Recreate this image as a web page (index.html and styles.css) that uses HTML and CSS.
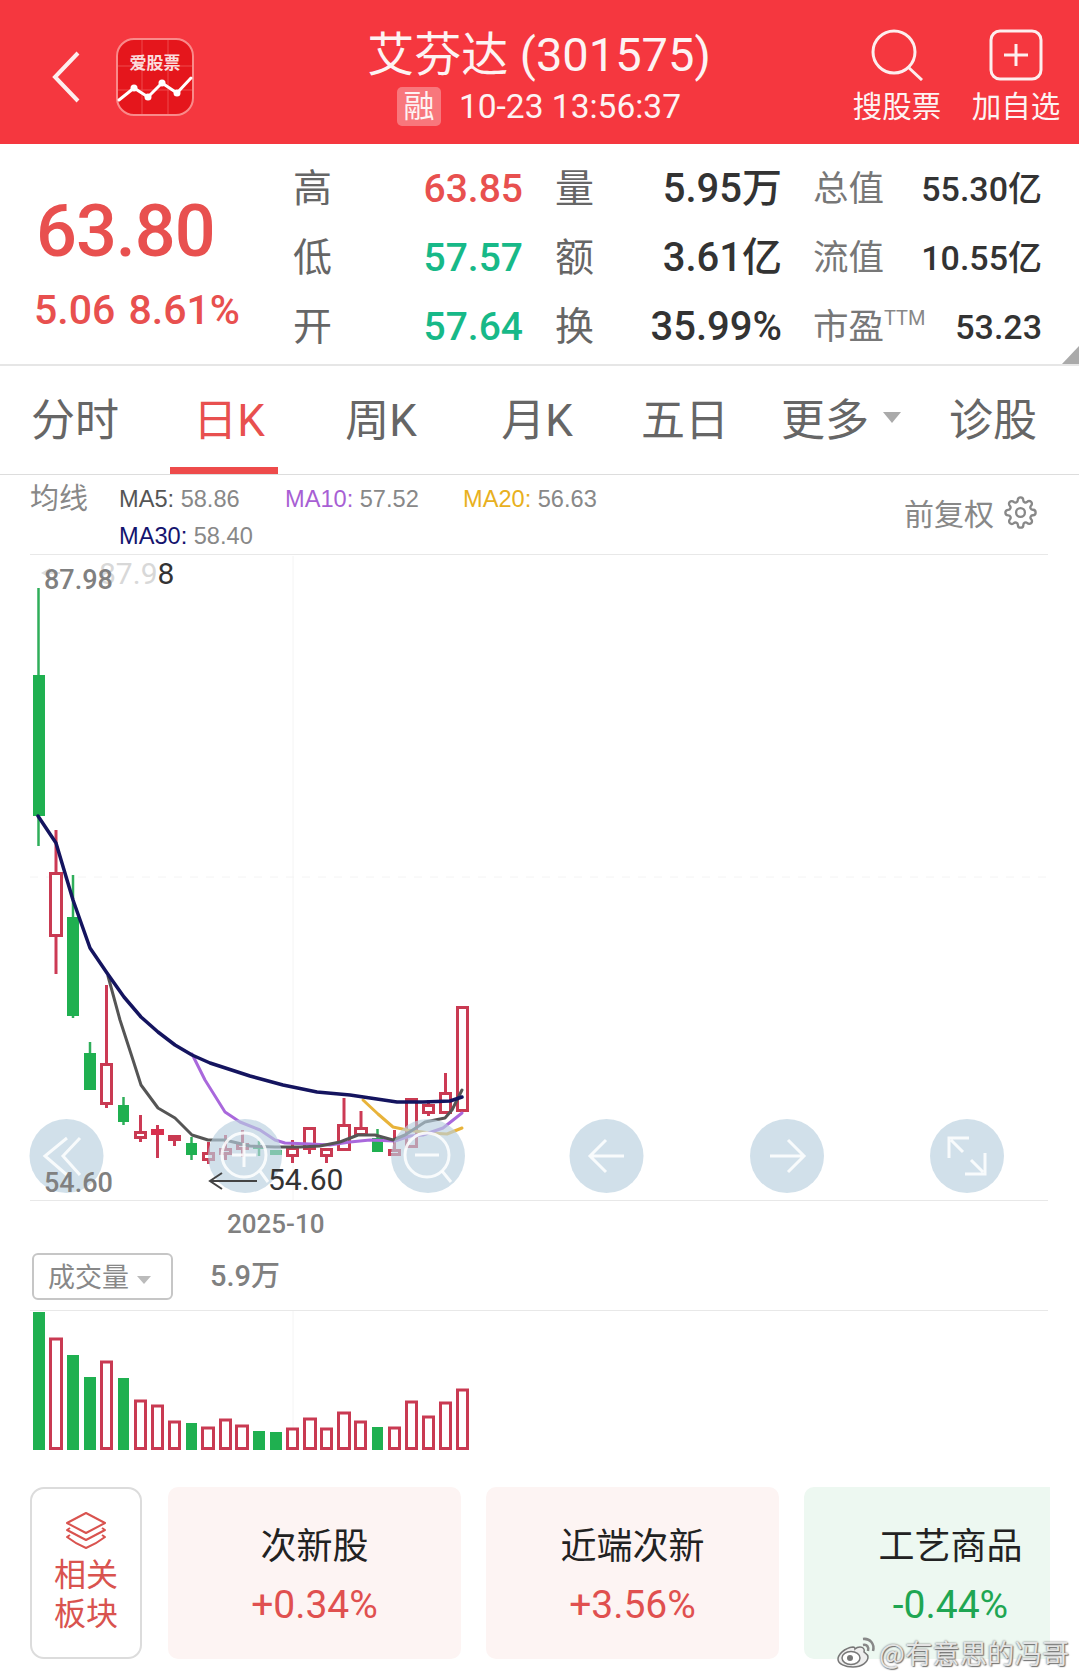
FILE: index.html
```html
<!DOCTYPE html>
<html lang="zh-CN">
<head>
    <meta charset="UTF-8">
    <meta name="viewport" content="width=device-width, initial-scale=1.0">
    <title>艾芬达 (301575)</title>
    <link rel="stylesheet" href="styles.css">
</head>
<body>
    <header class="topbar">
        <div class="topbar-left">
            <svg class="back-icon" viewBox="0 0 28 52"><path d="M26 2 L3 26 L26 50"/></svg>
            <svg class="logo" viewBox="0 0 78 78">
                <rect x="1" y="1" width="76" height="76" rx="17" fill="#e5161c" stroke="#f98a8a" stroke-width="2"/>
                <path d="M2 28H76M2 52H76M26 2V76M52 2V76" stroke="#ee4a4c" stroke-width="1"/>
                <text x="39" y="31" class="logo-text" text-anchor="middle">爱股票</text>
                <polyline points="3,62 18,50 32,59 46,45 61,55 75,40" fill="none" stroke="#fff" stroke-width="3"/>
                <circle cx="18" cy="50" r="3.5" fill="#fff"/><circle cx="32" cy="59" r="3.5" fill="#fff"/>
                <circle cx="46" cy="45" r="3.5" fill="#fff"/><circle cx="61" cy="55" r="3.5" fill="#fff"/>
            </svg>
        </div>
        <div class="topbar-title">
            <h1>艾芬达 (301575)</h1>
            <div class="subline"><span class="badge">融</span><span class="time">10-23 13:56:37</span></div>
        </div>
        <div class="tools">
            <div class="tool">
                <svg class="tool-icon" viewBox="0 0 54 52"><circle cx="24" cy="23" r="21"/><path d="M38 38 L52 51"/></svg>
                <span>搜股票</span>
            </div>
            <div class="tool">
                <svg class="tool-icon" viewBox="0 0 54 52"><rect x="2" y="2" width="50" height="48" rx="9"/><path d="M27 15V37M15 26H39"/></svg>
                <span>加自选</span>
            </div>
        </div>
    </header>

    <section class="stats">
        <div class="price">
            <div class="price-now">63.80</div>
            <div class="price-change">5.06 8.61%</div>
        </div>
        <div class="stat-grid">
            <span class="lbl">高</span><span class="val red">63.85</span>
            <span class="lbl lbl-mid">量</span><span class="val dark">5.95万</span>
            <span class="lbl-small">总值</span><span class="val-small">55.30亿</span>

            <span class="lbl">低</span><span class="val green">57.57</span>
            <span class="lbl lbl-mid">额</span><span class="val dark">3.61亿</span>
            <span class="lbl-small">流值</span><span class="val-small">10.55亿</span>

            <span class="lbl">开</span><span class="val green">57.64</span>
            <span class="lbl lbl-mid">换</span><span class="val dark">35.99%</span>
            <span class="lbl-small">市盈<sup>TTM</sup></span><span class="val-small">53.23</span>
        </div>
        <div class="corner"></div>
    </section>

    <nav class="tabs">
        <div class="tab">分时</div>
        <div class="tab active">日K</div>
        <div class="tab">周K</div>
        <div class="tab">月K</div>
        <div class="tab">五日</div>
        <div class="tab">更多<i class="caret"></i></div>
        <div class="tab">诊股</div>
    </nav>

    <section class="legend">
        <div class="legend-title">均线</div>
        <div class="legend-items">
            <span class="ma ma5">MA5: <b>58.86</b></span>
            <span class="ma ma10">MA10: <b>57.52</b></span>
            <span class="ma ma20">MA20: <b>56.63</b></span>
            <span class="ma ma30">MA30: <b>58.40</b></span>
        </div>
        <div class="adjust">
            <span>前复权</span>
            <svg class="gear" viewBox="0 0 24 24"><circle cx="12" cy="12" r="3.2"/><path d="M19.4 15a1.65 1.65 0 0 0 .33 1.82l.06.06a2 2 0 0 1 0 2.83 2 2 0 0 1-2.83 0l-.06-.06a1.65 1.65 0 0 0-1.82-.33 1.65 1.65 0 0 0-1 1.51V21a2 2 0 0 1-2 2 2 2 0 0 1-2-2v-.09A1.65 1.65 0 0 0 9 19.4a1.65 1.65 0 0 0-1.82.33l-.06.06a2 2 0 0 1-2.83 0 2 2 0 0 1 0-2.83l.06-.06a1.65 1.65 0 0 0 .33-1.82 1.65 1.65 0 0 0-1.51-1H3a2 2 0 0 1-2-2 2 2 0 0 1 2-2h.09A1.65 1.65 0 0 0 4.6 9a1.65 1.65 0 0 0-.33-1.82l-.06-.06a2 2 0 0 1 0-2.83 2 2 0 0 1 2.83 0l.06.06a1.65 1.65 0 0 0 1.82.33H9a1.65 1.65 0 0 0 1-1.51V3a2 2 0 0 1 2-2 2 2 0 0 1 2 2v.09a1.65 1.65 0 0 0 1 1.51 1.65 1.65 0 0 0 1.82-.33l.06-.06a2 2 0 0 1 2.83 0 2 2 0 0 1 0 2.83l-.06.06a1.65 1.65 0 0 0-.33 1.82V9a1.65 1.65 0 0 0 1.51 1H21a2 2 0 0 1 2 2 2 2 0 0 1-2 2h-.09a1.65 1.65 0 0 0-1.51 1z"/></svg>
        </div>
    </section>

    <section class="chart">
        <!-- viewBox uses page coordinates so the candle numbers read straight off the screenshot -->
        <svg class="chart-svg" viewBox="0 554 1079 647">
            <g class="grid">
                <line x1="30" y1="554.5" x2="1048" y2="554.5"/>
                <line x1="30" y1="1200.5" x2="1048" y2="1200.5"/>
                <line class="grid-soft" x1="293" y1="556" x2="293" y2="1200"/>
                <line class="grid-soft dashed" x1="30" y1="877" x2="1048" y2="877"/>
            </g>
            <path class="marker" d="M50 568 L41 573 L50 578 Z"/>
            <line class="marker-line" x1="50" y1="573" x2="60" y2="573"/>

            <g class="wick-g">
                <line x1="38.5" y1="588" x2="38.5" y2="846"/>
                <line x1="73" y1="875" x2="73" y2="1018"/>
                <line x1="90" y1="1042" x2="90" y2="1090"/>
                <line x1="123.5" y1="1097" x2="123.5" y2="1125"/>
                <line x1="191.5" y1="1137" x2="191.5" y2="1160"/>
                <line x1="259" y1="1141" x2="259" y2="1156"/>
                <line x1="377.5" y1="1129" x2="377.5" y2="1152"/>
            </g>
            <g class="body-g">
                <rect x="33" y="675" width="12" height="141"/>
                <rect x="67" y="917" width="12" height="99"/>
                <rect x="84" y="1053" width="12" height="37"/>
                <rect x="118" y="1105" width="11" height="17"/>
                <rect x="186" y="1143" width="11" height="12"/>
                <rect x="253" y="1146" width="12" height="3"/>
                <rect x="270" y="1150" width="12" height="5"/>
                <rect x="372" y="1138" width="11" height="14"/>
            </g>
            <g class="wick-r">
                <line x1="56" y1="830" x2="56" y2="974"/>
                <line x1="106.5" y1="985" x2="106.5" y2="1108"/>
                <line x1="140.5" y1="1115" x2="140.5" y2="1142"/>
                <line x1="157.5" y1="1125" x2="157.5" y2="1158"/>
                <line x1="174.5" y1="1135" x2="174.5" y2="1146"/>
                <line x1="208.5" y1="1142" x2="208.5" y2="1164"/>
                <line x1="225.5" y1="1135" x2="225.5" y2="1160"/>
                <line x1="242.5" y1="1130" x2="242.5" y2="1157"/>
                <line x1="292.5" y1="1140" x2="292.5" y2="1163"/>
                <line x1="309.5" y1="1127" x2="309.5" y2="1154"/>
                <line x1="326.5" y1="1148" x2="326.5" y2="1163"/>
                <line x1="344" y1="1098" x2="344" y2="1124"/>
                <line x1="361" y1="1111" x2="361" y2="1127"/>
                <line x1="394.5" y1="1130" x2="394.5" y2="1149"/>
                <line x1="428.5" y1="1100" x2="428.5" y2="1116"/>
                <line x1="445.5" y1="1073" x2="445.5" y2="1092"/>
            </g>
            <g class="body-r">
                <rect x="50.5" y="873.5" width="11" height="62"/>
                <rect x="101.5" y="1064.5" width="10" height="39"/>
                <rect x="135.5" y="1132.5" width="10" height="5"/>
                <rect class="solid" x="151" y="1129" width="13" height="6"/>
                <rect x="169.5" y="1136.5" width="10" height="3"/>
                <rect x="203.5" y="1153.5" width="10" height="6"/>
                <rect x="220.5" y="1149.5" width="10" height="4"/>
                <rect x="237.5" y="1144.5" width="10" height="4"/>
                <rect x="287.5" y="1148.5" width="10" height="7"/>
                <rect x="304.5" y="1128.5" width="10" height="20"/>
                <rect x="321.5" y="1149.5" width="10" height="6"/>
                <rect x="338.5" y="1125.5" width="11" height="24"/>
                <rect x="355.5" y="1128.5" width="11" height="6"/>
                <rect x="389.5" y="1150.5" width="10" height="4"/>
                <rect x="406.5" y="1099.5" width="10" height="47"/>
                <rect x="423.5" y="1105.5" width="10" height="7"/>
                <rect x="440.5" y="1093.5" width="10" height="19"/>
                <rect x="457.5" y="1007.5" width="10" height="103"/>
            </g>

            <polyline class="line-ma20" points="363,1100 378,1114 393,1127 407,1130 430,1133 447,1134 462,1128"/>
            <polyline class="line-ma10" points="192,1054 205,1080 225,1112 240,1122 260,1130 275,1140 285,1143 310,1144 330,1145 350,1142 370,1140 395,1141 410,1136 423,1135 443,1128 462,1113"/>
            <polyline class="line-ma5" points="108,976 120,1020 133,1060 141,1085 158,1108 175,1118 192,1135 208,1140 225,1140 250,1146 275,1147 300,1147 320,1146 340,1142 358,1135 375,1135 393,1140 405,1135 425,1122 445,1118 452,1110 462,1090"/>
            <polyline class="line-ma30" points="38,816 56,843 73,900 90,948 107,973 124,997 141,1017 158,1032 175,1045 192,1055 210,1063 250,1076 283,1085 317,1092 350,1095 397,1102 423,1102 450,1101 462,1097"/>

            <g class="ctrl">
                <circle class="ctrl-bg" cx="66.5" cy="1156" r="37"/>
                <path d="M67 1138 L45 1156 L67 1175M80 1138 L63 1156 L80 1175"/>
                <circle class="ctrl-bg" cx="245" cy="1156" r="37"/>
                <circle class="ctrl-ring" cx="244" cy="1155" r="22"/>
                <path d="M244 1143V1167M232 1155H256M260 1171 L268 1182"/>
                <circle class="ctrl-bg" cx="428" cy="1156" r="37"/>
                <circle class="ctrl-ring" cx="427" cy="1155" r="22"/>
                <path d="M415 1155H439M442 1171 L451 1182"/>
                <circle class="ctrl-bg" cx="606.5" cy="1156" r="37"/>
                <path d="M624 1156H590M606 1140 L590 1156 L606 1172"/>
                <circle class="ctrl-bg" cx="787" cy="1156" r="37"/>
                <path d="M770 1156H804M788 1140 L804 1156 L788 1172"/>
                <circle class="ctrl-bg" cx="967" cy="1156" r="37"/>
                <path d="M969 1138H949V1158M951 1140 L963 1152M971 1160 L983 1172M985 1153V1174H965"/>
            </g>

            <path class="low-arrow" d="M257 1181H210M222 1173 L210 1181 L222 1189"/>
        </svg>
        <div class="tag tag-ghost">87.9<em>8</em></div>
        <div class="tag tag-high">87.98</div>
        <div class="tag tag-low">54.60</div>
        <div class="tag tag-low-dark">54.60</div>
    </section>

    <div class="date-row">2025-10</div>

    <div class="vol-head">
        <div class="vol-select">成交量<i class="caret caret-small"></i></div>
        <div class="vol-value">5.9万</div>
    </div>

    <section class="volume">
        <svg class="volume-svg" viewBox="0 1310 1079 150">
            <line class="vol-rule" x1="30" y1="1310.5" x2="1048" y2="1310.5"/>
            <line class="vol-soft" x1="293" y1="1311" x2="293" y2="1450"/>
            <g class="body-g">
                <rect x="33" y="1312" width="12" height="138"/>
                <rect x="67" y="1355" width="12" height="95"/>
                <rect x="84" y="1377" width="12" height="73"/>
                <rect x="118" y="1378" width="11" height="72"/>
                <rect x="186" y="1423" width="11" height="27"/>
                <rect x="253" y="1431" width="12" height="19"/>
                <rect x="270" y="1432" width="12" height="18"/>
                <rect x="372" y="1427" width="11" height="23"/>
            </g>
            <g class="body-r">
                <rect x="50.5" y="1339" width="11" height="109.5"/>
                <rect x="101.5" y="1362" width="10" height="86.5"/>
                <rect x="135.5" y="1401" width="10" height="47.5"/>
                <rect x="152.5" y="1406" width="10" height="42.5"/>
                <rect x="169.5" y="1422" width="10" height="26.5"/>
                <rect x="202.5" y="1428" width="11" height="20.5"/>
                <rect x="220.5" y="1420" width="10" height="28.5"/>
                <rect x="236.5" y="1426" width="11" height="22.5"/>
                <rect x="287.5" y="1429" width="10" height="19.5"/>
                <rect x="304.5" y="1419" width="11" height="29.5"/>
                <rect x="321.5" y="1429" width="10" height="19.5"/>
                <rect x="338.5" y="1413" width="11" height="35.5"/>
                <rect x="355.5" y="1422" width="10" height="26.5"/>
                <rect x="389.5" y="1428" width="10" height="20.5"/>
                <rect x="406.5" y="1402" width="10" height="46.5"/>
                <rect x="423.5" y="1417" width="10" height="31.5"/>
                <rect x="440.5" y="1403" width="10" height="45.5"/>
                <rect x="457.5" y="1390" width="10" height="58.5"/>
            </g>
        </svg>
    </section>

    <section class="sectors">
        <div class="sector-head">
            <svg class="layers" viewBox="0 0 44 40">
                <path d="M22 2 L41 12 L22 22 L3 12 Z"/>
                <path d="M6 17 L3 19 L22 29 L41 19 L38 17"/>
                <path d="M6 24 L3 26 Q12 33 22 37 Q32 33 41 26 L38 24"/>
            </svg>
            <div class="sector-head-text">相关<br>板块</div>
        </div>
        <div class="sector-list">
            <div class="sector">
                <div class="sector-name">次新股</div>
                <div class="sector-pct up">+0.34%</div>
            </div>
            <div class="sector">
                <div class="sector-name">近端次新</div>
                <div class="sector-pct up">+3.56%</div>
            </div>
            <div class="sector sector-down">
                <div class="sector-name">工艺商品</div>
                <div class="sector-pct down">-0.44%</div>
            </div>
        </div>
    </section>

    <div class="watermark">
        <svg class="weibo" viewBox="0 0 40 32">
            <path d="M17 11C8 12 2 19 2 23C2 28 9 31 17 31C26 31 32 26 32 21C32 18 29 17 28 16C29 13 27 11 24 11C22 11 20 12 19 13C19 11 18 11 17 11Z"/>
            <ellipse class="weibo-in" cx="15" cy="22" rx="9" ry="6.5"/>
            <circle class="weibo-eye" cx="14" cy="22" r="3"/>
            <path class="weibo-arc" d="M27 9C31 8 33 11 32 15M27 3C34 2 39 8 37 15"/>
        </svg>
        <span>@有意思的冯哥</span>
    </div>
</body>
</html>
```

FILE: styles.css
```css
/* Reset */
* {
  box-sizing: border-box;
  margin: 0;
  padding: 0;
}

html,
body {
  width: 1079px;
  height: 1678px;
  overflow: hidden;
}

body {
  position: relative;
  background-color: #fff;
  font-family: Roboto, "Noto Sans CJK SC", sans-serif;
  color: #333;
}

/* Top red bar */
.topbar {
  display: grid;
  grid-template-columns: 225px 628px 226px;
  height: 144px;
  background-color: #f5373f;
  color: #fdf3f3;
}

.topbar-left {
  display: flex;
  align-items: flex-start;
  padding: 38px 0 0 52px;
}

.back-icon {
  width: 28px;
  height: 52px;
  margin: 13px 36px 0 0;
  fill: none;
  stroke: #fdeeee;
  stroke-width: 4;
}

.logo {
  width: 78px;
  height: 78px;
  flex-shrink: 0;
}

.logo-text {
  font-family: "Noto Sans CJK SC", sans-serif;
  font-size: 17px;
  font-weight: 700;
  fill: #fbdcdc;
}

.topbar-title {
  padding-top: 28px;
  text-align: center;
}

.topbar-title h1 {
  font-size: 47px;
  font-weight: 400;
  line-height: 54px;
  white-space: nowrap;
}

.subline {
  display: flex;
  align-items: center;
  justify-content: center;
  gap: 18px;
  margin-top: 5px;
}

.badge {
  width: 44px;
  height: 39px;
  border-radius: 5px;
  background-color: rgba(255, 255, 255, 0.32);
  font-size: 31px;
  line-height: 39px;
}

.time {
  font-size: 33.5px;
  line-height: 39px;
}

.tools {
  display: flex;
  gap: 31px;
  padding-top: 29px;
}

.tool {
  display: flex;
  flex-direction: column;
  align-items: center;
  width: 88px;
  font-size: 29.5px;
  line-height: 40px;
  white-space: nowrap;
}

.tool-icon {
  width: 54px;
  height: 52px;
  margin-bottom: 6px;
  fill: none;
  stroke: #fdeeee;
  stroke-width: 3;
}

/* Quote block */
.stats {
  position: relative;
  display: flex;
  height: 222px;
  border-bottom: 2px solid #e6e6e6;
}

.price {
  width: 293px;
  padding: 48px 0 0 36px;
  color: #e8504f;
}

.price-now {
  font-size: 72px;
  font-weight: 500;
  line-height: 80px;
  letter-spacing: -1px;
}

.price-change {
  margin: 13px 0 0 -2px;
  font-size: 41px;
  font-weight: 500;
  line-height: 50px;
  word-spacing: 3px;
  white-space: nowrap;
}

.stat-grid {
  display: grid;
  grid-template-columns: 42px 188px 71px 188px 104px 156px;
  grid-auto-rows: 69px;
  align-items: center;
  padding-top: 10px;
  line-height: 50px;
}

.lbl {
  color: #666;
  font-size: 39px;
}

.lbl-mid {
  justify-self: end;
}

.val {
  justify-self: end;
  font-size: 39px;
  font-weight: 500;
}

.val.dark {
  font-size: 40px;
}

.red {
  color: #e8504f;
}

.green {
  color: #17b988;
}

.dark {
  color: #333;
}

.lbl-small {
  padding-left: 31px;
  color: #777;
  font-size: 35.5px;
  white-space: nowrap;
}

.lbl-small sup {
  font-size: 20px;
  color: #888;
  vertical-align: 14px;
  line-height: 0;
}

.val-small {
  justify-self: end;
  font-size: 34px;
  font-weight: 500;
  color: #333;
}

.corner {
  position: absolute;
  right: 0;
  bottom: 0;
  width: 0;
  height: 0;
  border-style: solid;
  border-width: 0 0 18px 17px;
  border-color: transparent transparent #aaa transparent;
}

/* Period tabs */
.tabs {
  display: grid;
  grid-template-columns: 150px 158px 146px 166px 130px 182px 122px 25px;
  height: 109px;
  border-bottom: 1px solid #ddd;
}

.tab {
  position: relative;
  display: flex;
  align-items: center;
  justify-content: center;
  height: 108px;
  padding-bottom: 6px;
  color: #666;
  font-size: 44px;
}

.tab.active {
  color: #e8504f;
}

.tab.active::after {
  content: "";
  position: absolute;
  left: 20px;
  bottom: 0;
  width: 108px;
  height: 7px;
  background-color: #ee4b4b;
}

.caret {
  width: 0;
  height: 0;
  margin-left: 14px;
  border-style: solid;
  border-width: 11px 9px 0 9px;
  border-color: #aaa transparent transparent transparent;
}

.caret-small {
  display: inline-block;
  margin-left: 8px;
  border-width: 8px 7px 0 7px;
  border-top-color: #bbb;
  vertical-align: middle;
}

/* Moving average legend */
.legend {
  display: flex;
  height: 79px;
  padding: 0 42px 0 30px;
}

.legend-title {
  width: 89px;
  padding-top: 4px;
  color: #888;
  font-size: 29px;
  line-height: 40px;
}

.legend-items {
  display: grid;
  grid-template-columns: 166px 178px 220px;
  grid-auto-rows: 37px;
  padding-top: 6px;
  font-family: "Liberation Sans", sans-serif;
  font-size: 23.6px;
  line-height: 37px;
}

.ma b {
  font-weight: 400;
  color: #888;
}

.ma5 {
  color: #555;
}

.ma10 {
  color: #a85fd4;
}

.ma20 {
  color: #e8b020;
}

.ma30 {
  color: #14146e;
}

.adjust {
  display: flex;
  align-items: center;
  gap: 10px;
  height: 40px;
  margin: 17px 0 0 auto;
  color: #888;
  font-size: 30px;
  white-space: nowrap;
}

.gear {
  width: 33px;
  height: 33px;
  fill: none;
  stroke: #888;
  stroke-width: 1.7;
}

/* Candle chart */
.chart {
  position: relative;
  height: 647px;
}

.chart-svg {
  display: block;
  width: 1079px;
  height: 647px;
}

.grid line {
  stroke: #e8e8e8;
  stroke-width: 1;
}

.grid .grid-soft {
  stroke: #f4f4f4;
}

.grid .dashed {
  stroke-dasharray: 8 8;
}

.marker {
  fill: #ddd;
}

.marker-line {
  stroke: #ddd;
  stroke-width: 2;
}

.wick-g line {
  stroke: #2fae5a;
  stroke-width: 2.5;
}

.body-g rect {
  fill: #1fb050;
}

.wick-r line {
  stroke: #cc3a55;
  stroke-width: 3;
}

.body-r rect {
  fill: #fff;
  stroke: #c93a52;
  stroke-width: 3;
}

.body-r .solid {
  fill: #d8304e;
  stroke: none;
}

polyline {
  fill: none;
  stroke-linejoin: round;
  stroke-linecap: round;
}

.line-ma5 {
  stroke: #555;
  stroke-width: 3;
}

.line-ma10 {
  stroke: #a968dc;
  stroke-width: 3;
}

.line-ma20 {
  stroke: #e8b33a;
  stroke-width: 3;
}

.line-ma30 {
  stroke: #14145f;
  stroke-width: 3.5;
}

.ctrl path,
.ctrl-ring {
  fill: none;
  stroke: #fff;
  stroke-width: 3;
  opacity: 0.85;
}

.ctrl .ctrl-bg {
  fill: #b9cfdf;
  opacity: 0.65;
}

.low-arrow {
  fill: none;
  stroke: #444;
  stroke-width: 2;
}

.tag {
  position: absolute;
  font-size: 30px;
  line-height: 34px;
  white-space: nowrap;
}

.tag-ghost {
  left: 99px;
  top: 3px;
  color: #d8d8d8;
}

.tag-ghost em {
  font-style: normal;
  color: #333;
}

.tag-high {
  left: 44px;
  top: 9px;
  color: #808080;
  font-size: 27px;
  font-weight: 500;
}

.tag-low {
  left: 44px;
  top: 612px;
  color: #808080;
  font-size: 27px;
  font-weight: 500;
}

.tag-low-dark {
  left: 268px;
  top: 609px;
  color: #333;
}

.date-row {
  height: 52px;
  padding: 1px 0 0 227px;
  color: #808080;
  font-size: 26px;
  font-weight: 500;
  line-height: 44px;
}

/* Volume */
.vol-head {
  display: flex;
  align-items: center;
  height: 47px;
  padding-left: 32px;
}

.vol-select {
  width: 141px;
  height: 47px;
  padding: 2px 0 0 14px;
  border: 2px solid #c6c6c6;
  border-radius: 6px;
  color: #888;
  font-size: 27px;
  line-height: 43px;
  white-space: nowrap;
}

.vol-value {
  margin-left: 37px;
  color: #808080;
  font-size: 29px;
  font-weight: 500;
  line-height: 47px;
  white-space: nowrap;
}

.volume {
  height: 150px;
  margin-top: 10px;
}

.volume-svg {
  display: block;
  width: 1079px;
  height: 150px;
}

.vol-rule {
  stroke: #e8e8e8;
  stroke-width: 1;
}

.vol-soft {
  stroke: #f4f4f4;
  stroke-width: 1;
}

/* Related sectors */
.sectors {
  display: flex;
  gap: 26px;
  width: 1050px;
  height: 172px;
  margin-top: 27px;
  padding-left: 30px;
  overflow: hidden;
}

.sector-head {
  display: flex;
  flex-direction: column;
  align-items: center;
  flex-shrink: 0;
  width: 112px;
  padding-top: 22px;
  border: 2px solid #dcdcdc;
  border-radius: 14px;
  color: #d9534f;
  font-size: 32px;
  line-height: 39px;
  text-align: center;
}

.sector-head-text {
  margin-top: 5px;
}

.layers {
  width: 44px;
  height: 40px;
  fill: none;
  stroke: #d9534f;
  stroke-width: 2;
  stroke-linejoin: round;
}

.sector-list {
  display: flex;
  gap: 25px;
}

.sector {
  flex-shrink: 0;
  width: 293px;
  padding-top: 36px;
  border-radius: 10px;
  background-color: #fdf4f3;
  text-align: center;
}

.sector-down {
  background-color: #edf8f1;
}

.sector-name {
  color: #222;
  font-size: 36px;
  line-height: 48px;
}

.sector-pct {
  margin-top: 10px;
  font-size: 39px;
  line-height: 48px;
}

.sector-pct.up {
  color: #e0504f;
}

.sector-pct.down {
  color: #1fa653;
}

/* Weibo watermark over the corner */
.watermark {
  position: absolute;
  left: 836px;
  top: 1635px;
  display: flex;
  align-items: center;
  gap: 3px;
  color: #e4e4e4;
  font-family: "Noto Sans CJK SC", sans-serif;
  font-size: 27.4px;
  line-height: 34px;
  white-space: nowrap;
  text-shadow: 0 0 2px #666, 1px 1px 1px #777;
}

.weibo {
  width: 40px;
  height: 32px;
  fill: #eee;
  stroke: #777;
  stroke-width: 1.5;
}

.weibo-in {
  fill: #fff;
}

.weibo-eye {
  fill: #777;
  stroke: none;
}

.weibo-arc {
  fill: none;
  stroke: #888;
  stroke-width: 2.5;
}
```
